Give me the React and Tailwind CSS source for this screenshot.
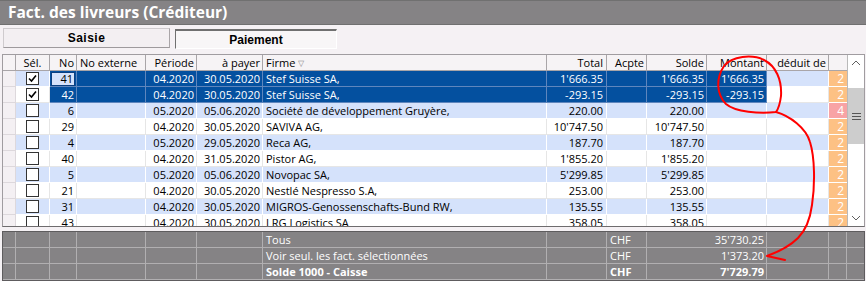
import React from 'react';

const COLS = "grid grid-cols-[13px_34px_27px_69px_51px_66px_284px_60px_40px_60px_60px_62px_18px]";
const SUM_COLS = "grid grid-cols-[13px_34px_27px_69px_51px_66px_284px_60px_40px_120px_62px_18px_17px]";

const rows = [
    {sel: true, no: '41', per: '04.2020', pay: '30.05.2020', firme: 'Stef Suisse SA,', total: "1'666.35", solde: "1'666.35", montant: "1'666.35", flag: '2', focus: true},
    {sel: true, no: '42', per: '04.2020', pay: '30.05.2020', firme: 'Stef Suisse SA,', total: '-293.15', solde: '-293.15', montant: '-293.15', flag: '2'},
    {sel: false, no: '6', per: '05.2020', pay: '05.06.2020', firme: 'Société de développement Gruyère,', total: '220.00', solde: '220.00', flag: '4', pink: true},
    {sel: false, no: '29', per: '04.2020', pay: '30.05.2020', firme: 'SAVIVA AG,', total: "10'747.50", solde: "10'747.50", flag: '2'},
    {sel: false, no: '4', per: '05.2020', pay: '29.05.2020', firme: 'Reca AG,', total: '187.70', solde: '187.70', flag: '2'},
    {sel: false, no: '40', per: '04.2020', pay: '31.05.2020', firme: 'Pistor AG,', total: "1'855.20", solde: "1'855.20", flag: '2'},
    {sel: false, no: '5', per: '05.2020', pay: '05.06.2020', firme: 'Novopac SA,', total: "5'299.85", solde: "5'299.85", flag: '2'},
    {sel: false, no: '21', per: '04.2020', pay: '30.05.2020', firme: 'Nestlé Nespresso S.A,', total: '253.00', solde: '253.00', flag: '2'},
    {sel: false, no: '31', per: '04.2020', pay: '30.05.2020', firme: 'MIGROS-Genossenschafts-Bund RW,', total: '135.55', solde: '135.55', flag: '2'},
    {sel: false, no: '43', per: '04.2020', pay: '30.05.2020', firme: 'LRG Logistics SA', total: '358.05', solde: '358.05', flag: '2'},
];

const Check = ({checked}) => (
    <div className="w-[13px] h-[13px] bg-white border border-[#333333] flex items-center justify-center">
        {checked && (
            <svg width="9" height="9" viewBox="0 0 9 9">
                <path d="M1 4.5 L3.5 7 L8 1.5" fill="none" stroke="#000" strokeWidth="1.6"/>
            </svg>
        )}
    </div>
);

const Row = ({r, i}) => {
    const light = i % 2 === 0;
    const base = light ? "bg-[#d5e2fb] border-white" : "bg-white border-[#e6e6e6]";
    const mid = r.sel ? "bg-[#04509f] text-white border-[#5f86bd]" : base;
    const cell = "h-[16px] border-r border-b leading-[15px] whitespace-nowrap overflow-hidden";
    return (
        <div className={COLS}>
            <div className={`${cell} bg-[#f4f0f3] border-[#ddd8dc]`}></div>
            <div className={`${cell} ${base} flex items-center justify-center`}><Check checked={r.sel}/></div>
            {r.focus ? (
                <div className={`${cell} ${mid} flex items-center px-[1px]`}>
                    <div className="w-full h-[14px] bg-[#d5e2fb] border border-[#0b3f80] text-black text-right pr-[1px] leading-[12px]">{r.no}</div>
                </div>
            ) : (
                <div className={`${cell} ${mid} text-right pr-[2px]`}>{r.no}</div>
            )}
            <div className={`${cell} ${mid} pl-[3px]`}></div>
            <div className={`${cell} ${mid} text-right pr-[2px]`}>{r.per}</div>
            <div className={`${cell} ${mid} text-right pr-[2px]`}>{r.pay}</div>
            <div className={`${cell} ${mid} pl-[3px]`}>{r.firme}</div>
            <div className={`${cell} ${mid} text-right pr-[3px]`}>{r.total}</div>
            <div className={`${cell} ${mid}`}></div>
            <div className={`${cell} ${mid} text-right pr-[2px]`}>{r.solde}</div>
            <div className={`${cell} ${mid} text-right pr-[2px]`}>{r.montant || ''}</div>
            <div className={`${cell} ${base}`}></div>
            <div className={`h-[16px] border-b border-white leading-[15px] text-white text-[12px] text-right pr-[3px] ${r.pink ? 'bg-[#f8a3a5]' : 'bg-[#fdc184]'}`}>{r.flag}</div>
        </div>
    );
};

const Header = () => {
    const h = "h-[16px] border-r border-b border-[#a9a5a8] leading-[15px] whitespace-nowrap overflow-hidden bg-[#f6f3f5]";
    return (
        <div className={COLS}>
            <div className={h}></div>
            <div className={`${h} text-center`}>Sél.</div>
            <div className={`${h} text-right pr-[2px]`}>No</div>
            <div className={`${h} pl-[3px]`}>No externe</div>
            <div className={`${h} text-right pr-[2px]`}>Période</div>
            <div className={`${h} text-right pr-[2px]`}>à payer</div>
            <div className={`${h} pl-[3px]`}>Firme <span className="text-[8px] text-[#8a8a8a] align-top">▽</span></div>
            <div className={`${h} text-right pr-[3px]`}>Total</div>
            <div className={`${h} text-right pr-[2px]`}>Acpte</div>
            <div className={`${h} text-right pr-[2px]`}>Solde</div>
            <div className={`${h} text-right pr-[2px]`}>Montant</div>
            <div className={`${h} text-right pr-[2px]`}>déduit de</div>
            <div className="h-[16px] border-b border-[#a9a5a8] bg-[#f6f3f5]"></div>
        </div>
    );
};

const Scrollbar = () => (
    <div className="w-[17px] flex flex-col bg-white border-l border-[#b9b9b9]">
        <div className="h-[16px] flex items-center justify-center">
            <svg width="10" height="6" viewBox="0 0 10 6"><path d="M1 5 L5 1 L9 5" fill="none" stroke="#606060" strokeWidth="1"/></svg>
        </div>
        <div className="h-[17px]"></div>
        <div className="h-[56px] bg-[#cdcdcd] flex flex-col items-center justify-center gap-[2px]">
            <div className="w-[9px] h-[1px] bg-[#555]"></div>
            <div className="w-[9px] h-[1px] bg-[#555]"></div>
            <div className="w-[9px] h-[1px] bg-[#555]"></div>
        </div>
        <div className="flex-1"></div>
        <div className="h-[16px] flex items-center justify-center">
            <svg width="10" height="6" viewBox="0 0 10 6"><path d="M1 1 L5 5 L9 1" fill="none" stroke="#606060" strokeWidth="1"/></svg>
        </div>
    </div>
);

const SumRow = ({label, amount, bold}) => {
    const c = "h-[16px] border-r border-b border-[#b1afb1] leading-[15px] whitespace-nowrap overflow-hidden";
    return (
        <div className={`${SUM_COLS} ${bold ? 'font-bold' : ''}`}>
            <div className={c}></div>
            <div className={c}></div>
            <div className={c}></div>
            <div className={c}></div>
            <div className={c}></div>
            <div className={c}></div>
            <div className={`${c} pl-[3px]`}>{label}</div>
            <div className={c}></div>
            <div className={`${c} pl-[3px]`}>CHF</div>
            <div className={`${c} text-right pr-[2px]`}>{amount}</div>
            <div className={c}></div>
            <div className={c}></div>
            <div className="h-[16px] border-b border-[#b1afb1]"></div>
        </div>
    );
};

export default function App() {
    return (
        <div className="relative w-[866px] h-[281px] overflow-hidden bg-[#f5f1f4] font-['Open_Sans',sans-serif] text-[11px] text-black">
            <div className="h-[25px] bg-[#858385] border-t border-[#5c645f] border-b border-[#707070] pl-[8px] flex items-center text-white font-bold text-[15.5px] leading-none">
                Fact. des livreurs (Créditeur)
            </div>
            <div className="h-[29px] flex items-start pl-[3px] gap-[5px] font-['Liberation_Sans',sans-serif] font-bold text-[12px]">
                <div className="mt-[3px] w-[167px] h-[20px] bg-[#f3eff2] border border-[#cfcbce] border-b-[#9e9a9d] border-r-[#a9a5a8] flex items-center justify-center tracking-[0.5px]">Saisie</div>
                <div className="mt-[4px] w-[162px] h-[20px] bg-[#f8f6f7] border-t-2 border-l border-[#707070] border-r border-b border-r-white border-b-white flex items-center justify-center">Paiement</div>
            </div>
            <div className="ml-[2px] w-[863px] border border-[#a09ca0] border-b-[#6e6c6e] flex">
                <div className="w-[844px]">
                    <Header/>
                    <div className="h-[155px] overflow-hidden">
                        {rows.map((r, i) => <Row key={i} r={r} i={i}/>)}
                    </div>
                </div>
                <Scrollbar/>
            </div>
            <div className="ml-[2px] mt-[4px] w-[863px] bg-[#858385] border border-[#5e5c5e] text-white">
                <SumRow label="Tous" amount="35'730.25"/>
                <SumRow label="Voir seul. les fact. sélectionnées" amount="1'373.20"/>
                <SumRow label="Solde 1000 - Caisse" amount="7'729.79" bold/>
            </div>
            <svg className="absolute left-0 top-0 pointer-events-none" width="866" height="281" viewBox="0 0 866 281">
                <path d="M776 112 C760 114 735 112 726 104 C716 94 716 78 724 66 C732 56 752 54 764 60 C776 66 782 80 781 96 C780 104 779 108 776 112"
                      fill="none" stroke="#ff0000" strokeWidth="2" strokeLinecap="round"/>
                <path d="M776 112 C790 116 806 128 810 142 C815 158 815 185 812 205 C810 220 806 230 798 238 C790 246 778 252 767 256 L785 260"
                      fill="none" stroke="#ff0000" strokeWidth="2" strokeLinecap="round" strokeLinejoin="round"/>
            </svg>
        </div>
    );
}
